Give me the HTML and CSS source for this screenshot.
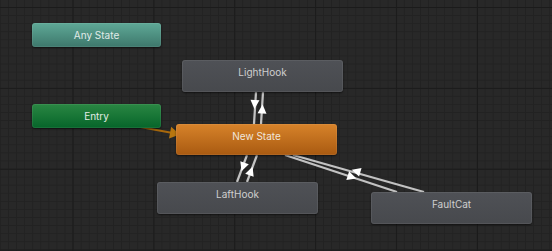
FILE: index.html
```html
<!DOCTYPE html>
<html>
<head>
  <meta charset="utf-8">
  <title>Animator</title>
  <link rel="stylesheet" href="styles.css">
</head>
<body>
  <div class="graph">
    <svg class="edges" width="552" height="251" viewBox="0 0 552 251">
      <!-- Entry -> New State -->
      <line class="entry-edge" x1="100" y1="119.5" x2="178" y2="134"/>
      <polygon class="entry-arrow" points="-5,-6 -5,6 5,0" transform="translate(175 133.5) rotate(10.5)"/>

      <!-- New State <-> LightHook -->
      <line class="edge" x1="256" y1="92" x2="254" y2="124"/>
      <line class="edge" x1="263" y1="92" x2="261" y2="124"/>
      <polygon class="arrow" points="-4.5,-4.5 -4.5,4.5 4.5,0" transform="translate(254.7 104.5) rotate(93.6)"/>
      <polygon class="arrow" points="-4.5,-4.5 -4.5,4.5 4.5,0" transform="translate(262.3 109) rotate(-86.4)"/>

      <!-- New State <-> LaftHook -->
      <line class="edge" x1="247" y1="155" x2="237" y2="182"/>
      <line class="edge" x1="257" y1="155" x2="247" y2="182"/>
      <polygon class="arrow" points="-4.5,-4.5 -4.5,4.5 4.5,0" transform="translate(243 167) rotate(110.3)"/>
      <polygon class="arrow" points="-4.5,-4.5 -4.5,4.5 4.5,0" transform="translate(251 171) rotate(-69.7)"/>

      <!-- New State <-> FaultCat -->
      <line class="edge" x1="293" y1="155" x2="424" y2="192"/>
      <line class="edge" x1="285" y1="155" x2="397" y2="192"/>
      <polygon class="arrow" points="-4.5,-4.5 -4.5,4.5 4.5,0" transform="translate(356 171) rotate(-164)"/>
      <polygon class="arrow" points="-4.5,-4.5 -4.5,4.5 4.5,0" transform="translate(352 177) rotate(18)"/>
    </svg>

    <div class="node any" style="left:32px;top:23px">Any State</div>
    <div class="node entry" style="left:32px;top:104px">Entry</div>
    <div class="node state" style="left:182px;top:60px">LightHook</div>
    <div class="node state default" style="left:176px;top:124px">New State</div>
    <div class="node state" style="left:157px;top:182px">LaftHook</div>
    <div class="node state" style="left:371px;top:192px">FaultCat</div>
  </div>
</body>
</html>
```

FILE: styles.css
```css
html, body {
  margin: 0;
  padding: 0;
  background: #282828;
}

.graph {
  position: relative;
  width: 552px;
  height: 251px;
  overflow: hidden;
  background-color: #282828;
  background-image:
    linear-gradient(to right, #1b1b1b 1px, transparent 1px),
    linear-gradient(to bottom, #1b1b1b 1px, transparent 1px),
    linear-gradient(to right, #222222 1px, transparent 1px),
    linear-gradient(to bottom, #222222 1px, transparent 1px);
  background-size: 80.9px 80.9px, 80.9px 80.9px, 8.09px 8.09px, 8.09px 8.09px;
  background-position: 72.5px 7px, 72.5px 7px, 8px 7px, 8px 7px;
  font-family: Inter, "Noto Sans", sans-serif;
}

.edges {
  position: absolute;
  left: 0;
  top: 0;
}

.edge {
  stroke: #c2c2c2;
  stroke-width: 2.2;
}

.arrow {
  fill: #ffffff;
}

.entry-edge {
  stroke: #a8680c;
  stroke-width: 2.2;
}

.entry-arrow {
  fill: #b8760f;
}

.node {
  position: absolute;
  box-sizing: border-box;
  border-radius: 3px;
  font-size: 10px;
  color: #cfcfcf;
  text-align: center;
  box-shadow: 0 1px 2px rgba(0, 0, 0, 0.55), inset 0 0 0 1px rgba(255, 255, 255, 0.07);
}

.any,
.entry {
  width: 129px;
  height: 24px;
  line-height: 24px;
}

.any {
  background: linear-gradient(#5fa997, #3d776b);
  color: #e0ebe8;
}

.entry {
  background: linear-gradient(#2a8743, #06652a);
  color: #e3ece5;
}

.state {
  width: 161px;
  height: 32px;
  padding-top: 6px;
  line-height: 12px;
  background: linear-gradient(#4f5156, #47494d);
}

.default {
  height: 31px;
  background: linear-gradient(#d7832a, #a95a11);
  color: #f0e6dc;
}
```
